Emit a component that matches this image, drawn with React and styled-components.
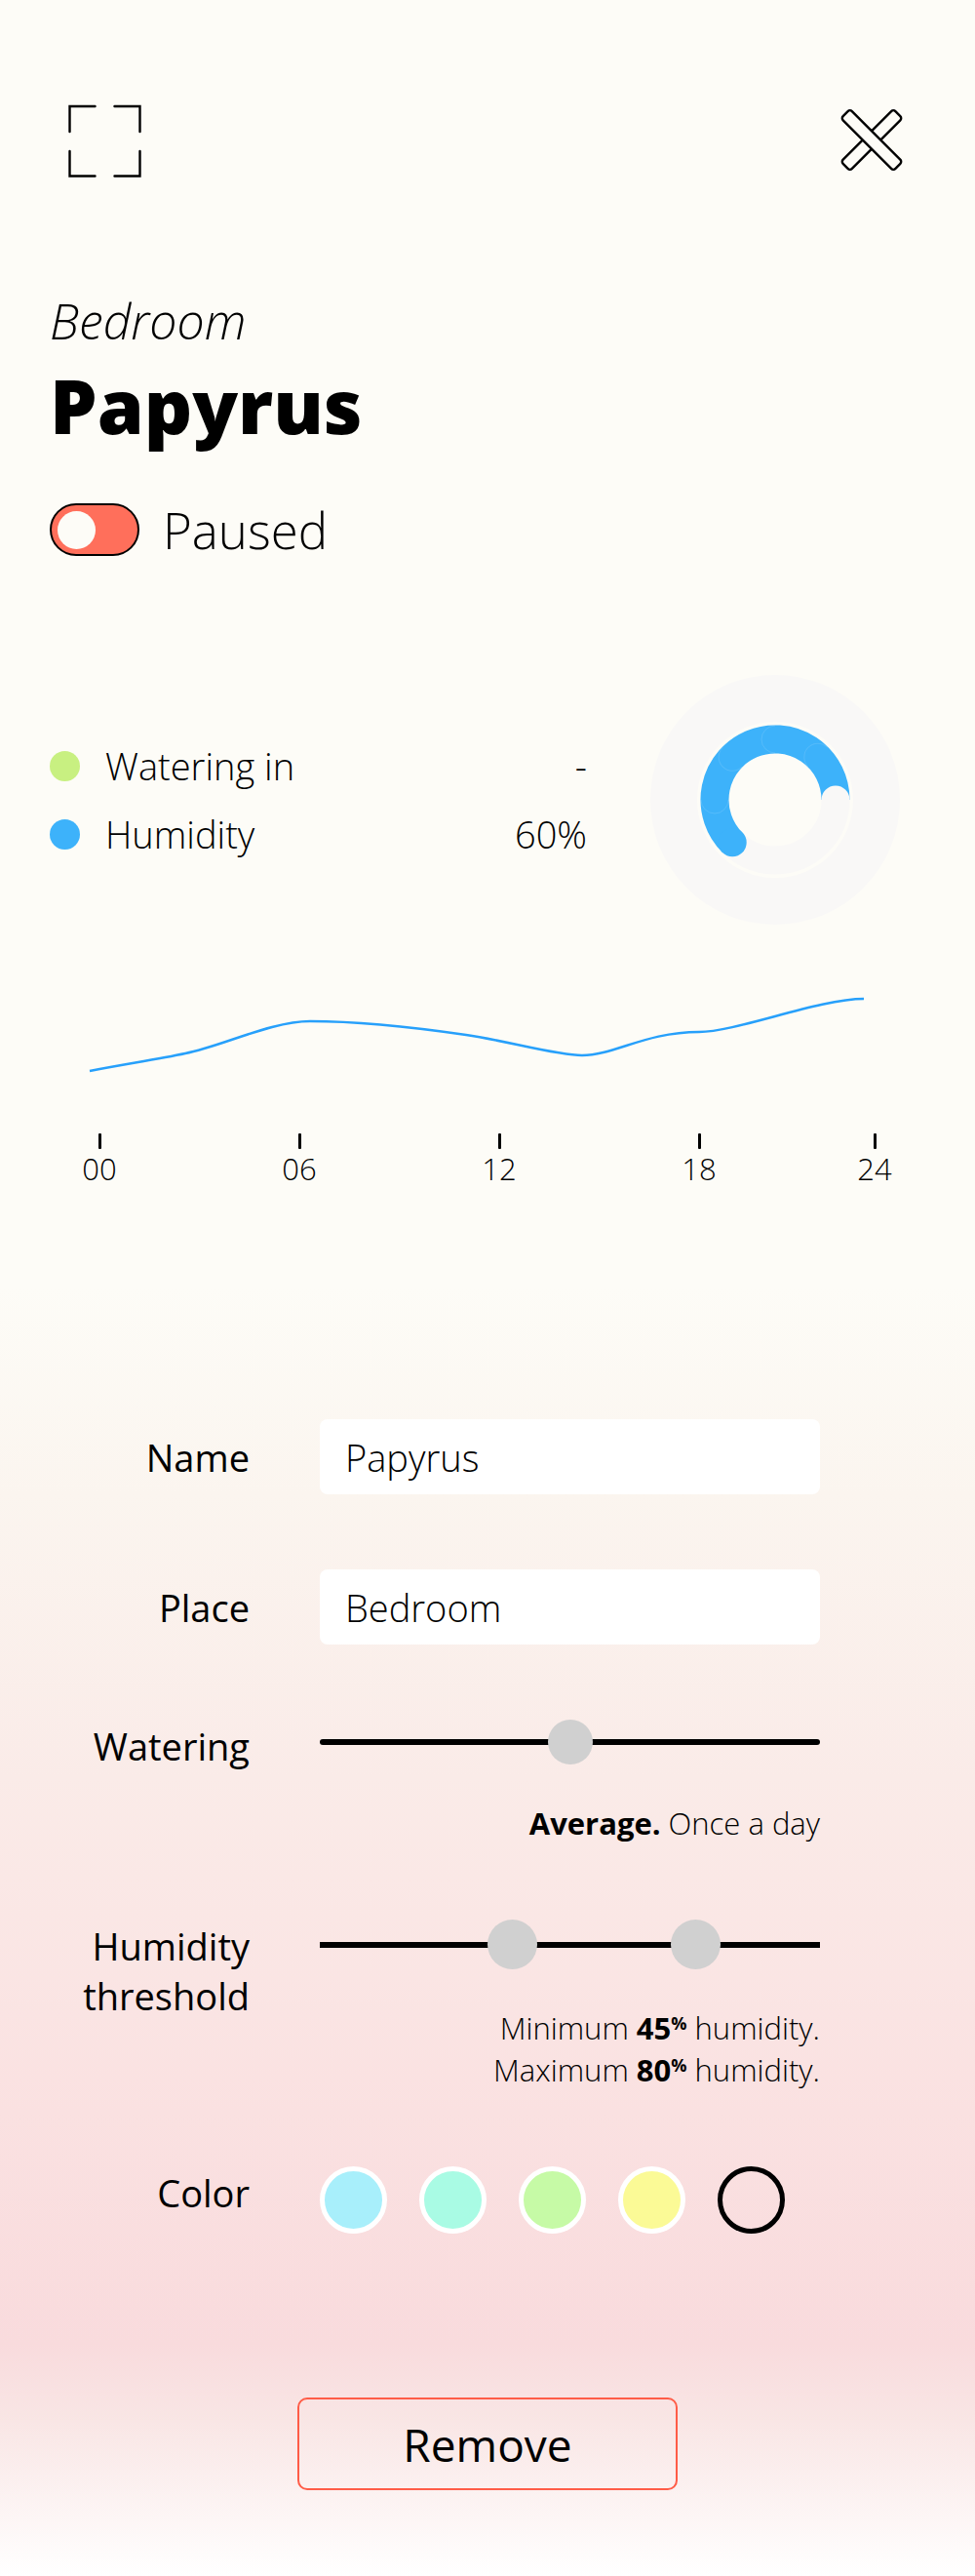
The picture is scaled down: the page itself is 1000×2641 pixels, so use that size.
import React, { useState } from "react";
import styled, { createGlobalStyle } from "styled-components";

const GlobalStyle = createGlobalStyle`
  *, *::before, *::after { box-sizing: border-box; }
  body {
    margin: 0;
    background: #fdfcf7;
    color: #000;
    font-family: "Open Sans", "Noto Sans", sans-serif;
    font-weight: 300;
  }
  button, input { font: inherit; color: inherit; }
`;

const Page = styled.main`
  min-height: 100vh;
  padding-bottom: 87px;
  background: linear-gradient(
    to bottom,
    #fdfcf7 0%,
    #fdfcf7 50%,
    #fbf5ef 58%,
    #faebe8 69%,
    #fae1e1 82%,
    #f9dbdd 91%,
    #f9e6e5 94%,
    #ffffff 100%
  );
`;

const TopBar = styled.header`
  display: flex;
  align-items: flex-start;
  justify-content: space-between;
  padding: 107px 70px 0;
`;

const IconButton = styled.button`
  display: flex;
  align-items: center;
  justify-content: center;
  padding: 0;
  border: 0;
  background: none;
  cursor: pointer;
`;

const Intro = styled.section`
  padding: 113px 51px 0;
`;

const Room = styled.p`
  margin: 0;
  font-size: 50px;
  line-height: 68px;
  font-style: italic;
`;

const PlantName = styled.h1`
  margin: 0;
  font-size: 77px;
  line-height: 106px;
  font-weight: 800;
`;

const ToggleLabel = styled.label`
  display: flex;
  align-items: center;
  gap: 24px;
  width: fit-content;
  margin-top: 40px;
  font-size: 51px;
  line-height: 68px;
`;

const Toggle = styled.input`
  appearance: none;
  display: flex;
  align-items: center;
  justify-content: ${(p) => (p.checked ? "flex-end" : "flex-start")};
  width: 92px;
  height: 54px;
  margin: 0;
  padding: 0 6px;
  border: 2px solid #000;
  border-radius: 27px;
  background: ${(p) => (p.checked ? "#c6f07f" : "#ff6f5b")};
  cursor: pointer;

  &::before {
    content: "";
    width: 39px;
    height: 39px;
    border-radius: 50%;
    background: #fdfcf7;
  }
`;

const Overview = styled.section`
  display: flex;
  align-items: center;
  gap: 65px;
  margin-top: 115px;
  padding: 0 77px 0 51px;
`;

const Stats = styled.dl`
  flex: 1;
  margin: 0;
  font-size: 38px;
  line-height: 70px;
`;

const Stat = styled.div`
  display: flex;
  align-items: center;

  &::before {
    content: "";
    width: 31px;
    height: 31px;
    margin-right: 26px;
    border-radius: 50%;
    background: ${(p) => p.$color};
  }

  dd { margin: 0 0 0 auto; }
`;

const Gauge = styled.svg`
  flex: none;
  display: block;
`;

const Curve = styled.svg`
  display: block;
  width: 100%;
  margin-top: 31px;
`;

const Axis = styled.ol`
  display: grid;
  grid-template-columns: 205fr 205fr 205fr 180fr 40px;
  margin: 33px 0 0;
  padding: 0 83px 0 82px;
  list-style: none;
  font-size: 31px;
  line-height: 40px;
`;

const Hour = styled.li`
  display: flex;
  flex-direction: column;
  align-items: center;
  width: 40px;

  &::before {
    content: "";
    width: 3px;
    height: 16px;
    border-radius: 1px;
    background: #000;
  }
`;

const Form = styled.form`
  display: grid;
  gap: 77px;
  margin-top: 237px;
`;

const Row = styled.div`
  display: grid;
  grid-template-columns: 206px 1fr;
  column-gap: 72px;
  align-items: ${(p) => (p.$centered ? "center" : "start")};
  padding: 0 159px 0 50px;
`;

const Label = styled.label`
  padding-top: 2px;
  font-size: 38px;
  line-height: 51px;
  font-weight: 400;
  text-align: right;
`;

const TextBox = styled.input`
  width: 100%;
  height: 77px;
  padding: 0 26px;
  border: 0;
  border-radius: 8px;
  background: #fff;
  font-size: 38px;
`;

const Slider = styled.div`
  display: grid;
  align-items: center;

  &::before {
    content: "";
    grid-area: 1 / 1;
    height: 6px;
    border-radius: ${(p) => p.$radius}px;
    background: #000;
  }
`;

const Range = styled.input`
  appearance: none;
  grid-area: 1 / 1;
  z-index: 1;
  width: 100%;
  height: ${(p) => p.$thumb}px;
  margin: 0;
  background: none;
  pointer-events: none;

  &::-webkit-slider-thumb {
    appearance: none;
    width: ${(p) => p.$thumb}px;
    height: ${(p) => p.$thumb}px;
    border-radius: 50%;
    background: #d0d0d0;
    pointer-events: auto;
    cursor: pointer;
  }
`;

const Hint = styled.p`
  margin: 39px 0 0;
  font-size: 31px;
  line-height: 43px;
  text-align: right;

  strong { font-weight: 700; }
  sup {
    font-size: 18px;
    line-height: 0;
    vertical-align: 10px;
  }
`;

const Swatches = styled.div`
  display: flex;
  gap: 33px;
`;

const Swatch = styled.input`
  appearance: none;
  width: 69px;
  height: 69px;
  margin: 0;
  border: 5px solid ${(p) => (p.checked ? "#000" : "#fff")};
  border-radius: 50%;
  background: ${(p) => p.$color};
  cursor: pointer;
`;

const Remove = styled.button`
  justify-self: center;
  width: 390px;
  height: 95px;
  margin-top: 91px;
  border: 2px solid #ff5c47;
  border-radius: 10px;
  background: none;
  font-size: 46px;
  font-weight: 400;
  cursor: pointer;
`;

const SEGMENTS = [180, 225, 270, 315];

function HumidityGauge() {
  return (
    <Gauge width="256" height="256" viewBox="-128 -128 256 256" role="img" aria-label="Humidity 60%">
      <circle r="128" fill="#f9f8f7" />
      <circle r="80" fill="#fdfcf7" />
      <circle r="62" fill="none" stroke="#f9f8f7" strokeWidth="29" />
      <path d="M-43.8 43.8A62 62 0 1 1 62 0" fill="none" stroke="#3db2fa" strokeWidth="29" />
      <circle cx="-43.8" cy="43.8" r="14.5" fill="#3db2fa" />
      <circle cx="62" cy="0" r="14.5" fill="#f9f8f7" />
      {SEGMENTS.map((angle) => (
        <path
          key={angle}
          d="M48 0A14 14 0 0 1 76 0"
          transform={`rotate(${angle})`}
          fill="none"
          stroke="#fff"
          strokeOpacity="0.12"
        />
      ))}
    </Gauge>
  );
}

const COLORS = [
  ["Blue", "#a8effb"],
  ["Mint", "#a9fbe4"],
  ["Green", "#c6faa6"],
  ["Yellow", "#fbfa96"],
  ["None", "transparent"],
];

export default function App() {
  const [active, setActive] = useState(false);
  const [name, setName] = useState("Papyrus");
  const [place, setPlace] = useState("Bedroom");
  const [watering, setWatering] = useState(50);
  const [low, setLow] = useState(45);
  const [high, setHigh] = useState(80);
  const [color, setColor] = useState("None");

  return (
    <Page>
      <GlobalStyle />
      <TopBar>
        <IconButton type="button" aria-label="Full screen">
          <svg width="75" height="75" viewBox="0 0 75 75" fill="none" stroke="#000" strokeWidth="2.4" strokeLinecap="round">
            <path d="M27.5 2H1.5V28M47.5 2H73.5V28M27.5 73.5H1.5V48M47.5 73.5H73.5V48" />
          </svg>
        </IconButton>
        <IconButton type="button" aria-label="Close">
          <svg width="72" height="73" viewBox="-36 -36.5 72 73" fill="#fdfcf7" stroke="#000" strokeWidth="2.4">
            <rect x="-38" y="-6.5" width="76" height="13" rx="3" transform="rotate(-45)" />
            <rect x="-38" y="-6.5" width="76" height="13" rx="3" transform="rotate(45)" />
          </svg>
        </IconButton>
      </TopBar>

      <Intro>
        <Room>Bedroom</Room>
        <PlantName>Papyrus</PlantName>
        <ToggleLabel>
          <Toggle type="checkbox" role="switch" checked={active} onChange={(e) => setActive(e.target.checked)} />
          {active ? "Active" : "Paused"}
        </ToggleLabel>
      </Intro>

      <Overview>
        <Stats>
          <Stat $color="#c8f081">
            <dt>Watering in</dt>
            <dd>-</dd>
          </Stat>
          <Stat $color="#3db2fa">
            <dt>Humidity</dt>
            <dd>60%</dd>
          </Stat>
        </Stats>
        <HumidityGauge />
      </Overview>

      <Curve viewBox="0 0 1000 150" role="img" aria-label="Humidity over the day">
        <path
          d="M92 119C128 112 162 107 190 101C227 94 278 68 318 68C370 68 430 75 478 82C520 88 570 103 597 103C630 103 662 79 717 79C755 79 840 45 886 45"
          fill="none"
          stroke="#27a0fb"
          strokeWidth="2.5"
        />
      </Curve>
      <Axis>
        {["00", "06", "12", "18", "24"].map((hour) => (
          <Hour key={hour}>{hour}</Hour>
        ))}
      </Axis>

      <Form onSubmit={(e) => e.preventDefault()}>
        <Row $centered>
          <Label htmlFor="name">Name</Label>
          <TextBox id="name" value={name} onChange={(e) => setName(e.target.value)} />
        </Row>
        <Row $centered>
          <Label htmlFor="place">Place</Label>
          <TextBox id="place" value={place} onChange={(e) => setPlace(e.target.value)} />
        </Row>
        <Row>
          <Label htmlFor="watering">Watering</Label>
          <div>
            <Slider $radius={3}>
              <Range id="watering" type="range" $thumb={46} value={watering} onChange={(e) => setWatering(+e.target.value)} />
            </Slider>
            <Hint>
              <strong>Average.</strong> Once a day
            </Hint>
          </div>
        </Row>
        <Row>
          <Label htmlFor="low">Humidity threshold</Label>
          <div>
            <Slider $radius={0}>
              <Range id="low" type="range" min="13" max="99" $thumb={51} value={low} onChange={(e) => setLow(Math.min(+e.target.value, high))} />
              <Range aria-label="Maximum humidity" type="range" min="13" max="99" $thumb={51} value={high} onChange={(e) => setHigh(Math.max(+e.target.value, low))} />
            </Slider>
            <Hint>
              Minimum <strong>{low}<sup>%</sup></strong> humidity.
              <br />
              Maximum <strong>{high}<sup>%</sup></strong> humidity.
            </Hint>
          </div>
        </Row>
        <Row>
          <Label as="span" id="color">Color</Label>
          <Swatches role="radiogroup" aria-labelledby="color">
            {COLORS.map(([label, value]) => (
              <Swatch
                key={label}
                type="radio"
                name="color"
                aria-label={label}
                $color={value}
                checked={color === label}
                onChange={() => setColor(label)}
              />
            ))}
          </Swatches>
        </Row>
        <Remove type="button">Remove</Remove>
      </Form>
    </Page>
  );
}
